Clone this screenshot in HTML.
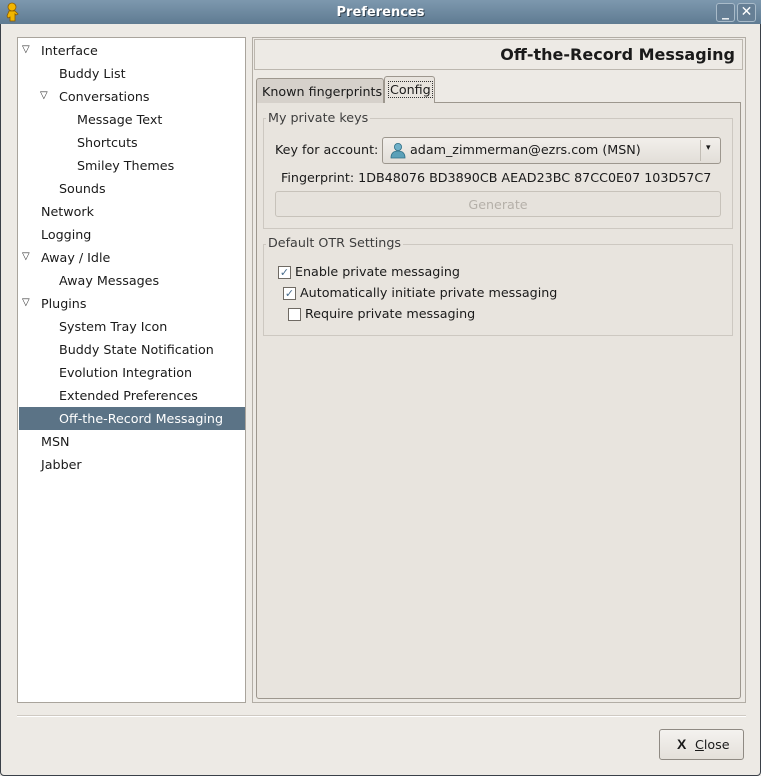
<!DOCTYPE html>
<html><head><style>
*{margin:0;padding:0;box-sizing:border-box}
body{width:761px;height:776px;overflow:hidden;background:#edeae5;font-family:"DejaVu Sans","Liberation Sans",sans-serif;font-size:12.7px;color:#1a1a1a;position:relative}
.a{position:absolute;white-space:nowrap}
.win{left:0;top:0;width:761px;height:776px;border:1px solid #3a4048;border-radius:5px 5px 4px 4px;overflow:hidden}
.tb{left:0;top:0;width:761px;height:24px;background:linear-gradient(#7d98ae,#5f7b92);color:#fff;font-weight:bold;text-align:center;line-height:25px;font-size:13px;text-shadow:1px 1px 0 #33424f}
.wb{top:3px;width:19px;height:19px;border:1px solid #a9bbc9;border-radius:3px;background:#667f95;color:#fff;font-weight:bold;text-align:center;line-height:17px;font-size:14px}
.tree{left:17px;top:37px;width:229px;height:666px;background:#fff;border:1px solid #a9a49c}
.r{position:absolute;height:23px;line-height:24px;white-space:nowrap}
.tri{position:absolute;font-size:10px;color:#333}
.sel{left:1px;top:369px;width:226px;height:23px;background:#5b7386}
.frame{left:252px;top:37px;width:494px;height:666px;border:1px solid #b2ada5}
.hdr{left:254px;top:39px;width:489px;height:31px;border:1px solid #bcb7af;font-size:16px;font-weight:bold;text-align:right;padding-right:7px;line-height:29px}
.nb{left:256px;top:102px;width:485px;height:597px;background:#e8e4de;border:1px solid #9d978e;border-radius:0 0 3px 3px}
.tab1{left:256px;top:78px;width:128px;height:25px;background:#d6d1cb;border:1px solid #9d978e;border-bottom:none;border-radius:3px 3px 0 0;padding-left:5px;line-height:26px}
.tab2{left:384px;top:76px;width:51px;height:27px;background:#e8e4de;border:1px solid #9d978e;border-bottom:none;border-radius:3px 3px 0 0;line-height:26px;padding-left:3px}
.grp{border:1px solid #cdc8c1}
.gl{background:#e8e4de;padding:0 2px;color:#3d3d3d}
.cb{position:absolute;width:13px;height:13px;border:1px solid #6f6a63;background:#fff;font-size:11px;line-height:11px;text-align:center;color:#4a6d8c}
</style></head><body>
<div class="a win"></div>
<div class="a tb">Preferences</div>
<svg class="a" style="left:6px;top:2px" width="14" height="20" viewBox="0 0 14 20"><circle cx="6" cy="5" r="4" fill="#f2b600" stroke="#8a5a00" stroke-width=".8"/><path d="M3 9h6l3 3-2 1-1-1v7H4v-4l-2 1-1-2z" fill="#f2b600" stroke="#8a5a00" stroke-width=".8"/></svg>
<div class="a wb" style="left:716px">_</div>
<div class="a wb" style="left:737px">✕</div>

<div class="a tree">
<div class="a sel"></div>
<span class="tri" style="left:4px;top:6px">▽</span><div class="r" style="left:23px;top:1px">Interface</div>
<div class="r" style="left:41px;top:24px">Buddy List</div>
<span class="tri" style="left:22px;top:52px">▽</span><div class="r" style="left:41px;top:47px">Conversations</div>
<div class="r" style="left:59px;top:70px">Message Text</div>
<div class="r" style="left:59px;top:93px">Shortcuts</div>
<div class="r" style="left:59px;top:116px">Smiley Themes</div>
<div class="r" style="left:41px;top:139px">Sounds</div>
<div class="r" style="left:23px;top:162px">Network</div>
<div class="r" style="left:23px;top:185px">Logging</div>
<span class="tri" style="left:4px;top:213px">▽</span><div class="r" style="left:23px;top:208px">Away / Idle</div>
<div class="r" style="left:41px;top:231px">Away Messages</div>
<span class="tri" style="left:4px;top:259px">▽</span><div class="r" style="left:23px;top:254px">Plugins</div>
<div class="r" style="left:41px;top:277px">System Tray Icon</div>
<div class="r" style="left:41px;top:300px">Buddy State Notification</div>
<div class="r" style="left:41px;top:323px">Evolution Integration</div>
<div class="r" style="left:41px;top:346px">Extended Preferences</div>
<div class="r" style="left:41px;top:369px;color:#fff">Off-the-Record Messaging</div>
<div class="r" style="left:23px;top:392px">MSN</div>
<div class="r" style="left:23px;top:415px">Jabber</div>
</div>

<div class="a frame"></div>
<div class="a hdr">Off-the-Record Messaging</div>
<div class="a nb"></div>
<div class="a tab1">Known fingerprints</div>
<div class="a tab2"><span style="border:1px dotted #333;padding:0 1px">Config</span></div>

<div class="a grp" style="left:263px;top:118px;width:470px;height:111px"></div>
<div class="a gl" style="left:266px;top:110px">My private keys</div>
<div class="a" style="left:275px;top:142px">Key for account:</div>
<div class="a" style="left:382px;top:137px;width:339px;height:27px;border:1px solid #9d978e;border-radius:3px;background:linear-gradient(#f2efeb,#e2ded8)"></div>
<div class="a" style="left:700px;top:140px;width:1px;height:21px;background:#c2bdb5"></div>
<div class="a" style="left:706px;top:143px;font-size:9px">▾</div>
<svg class="a" style="left:389px;top:142px" width="17" height="17" viewBox="0 0 17 17"><circle cx="9" cy="5" r="3.6" fill="#6fb0c8" stroke="#2f6f86" stroke-width=".8"/><path d="M2 16c0-5 3-7 7-7s7 2 7 7z" fill="#5aa0b8" stroke="#2f6f86" stroke-width=".8"/></svg>
<div class="a" style="left:410px;top:142px">adam_zimmerman@ezrs.com (MSN)</div>
<div class="a" style="left:281px;top:170px">Fingerprint: 1DB48076 BD3890CB AEAD23BC 87CC0E07 103D57C7</div>
<div class="a" style="left:275px;top:191px;width:446px;height:26px;border:1px solid #c7c2ba;border-radius:3px;background:#e6e2dc;color:#b5b0a9;text-align:center;line-height:25px">Generate</div>

<div class="a grp" style="left:263px;top:244px;width:470px;height:92px"></div>
<div class="a gl" style="left:266px;top:235px">Default OTR Settings</div>
<div class="cb" style="left:278px;top:266px">✓</div><div class="a" style="left:295px;top:264px">Enable private messaging</div>
<div class="cb" style="left:283px;top:287px">✓</div><div class="a" style="left:300px;top:285px">Automatically initiate private messaging</div>
<div class="cb" style="left:288px;top:308px"></div><div class="a" style="left:305px;top:306px">Require private messaging</div>

<div class="a" style="left:17px;top:715px;width:729px;height:1px;background:#cfcac3"></div>
<div class="a" style="left:17px;top:716px;width:729px;height:1px;background:#fff"></div>
<div class="a" style="left:659px;top:729px;width:85px;height:31px;border:1px solid #8f8a83;border-radius:3px;background:linear-gradient(#f4f2ef,#e4e0da)"></div>
<div class="a" style="left:677px;top:736px;font-weight:bold;font-size:14px;font-family:'Liberation Sans',sans-serif">X</div>
<div class="a" style="left:695px;top:737px"><u>C</u>lose</div>
</body></html>
